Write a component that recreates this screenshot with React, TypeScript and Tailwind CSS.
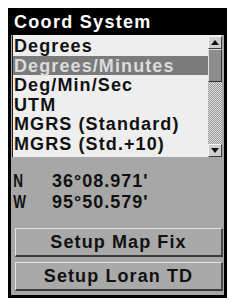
import React from 'react'

const items = ['Degrees', 'Degrees/Minutes', 'Deg/Min/Sec', 'UTM', 'MGRS (Standard)', 'MGRS (Std.+10)']

function Arrow({ down }: { down?: boolean }) {
	return (
		<div className="flex h-[13px] w-full items-center justify-center border-r border-b border-[#3c3c3c] border-t border-l border-t-[#f4f4f4] border-l-[#f4f4f4] bg-[#cfcfcf]">
			<svg width="8" height="5" viewBox="0 0 8 5">
				{down ? <polygon points="0,0 8,0 4,5" fill="#111" /> : <polygon points="0,5 8,5 4,0" fill="#111" />}
			</svg>
		</div>
	)
}

function Button({ label }: { label: string }) {
	return (
		<div className="ml-[4px] mr-[1px] flex h-[29px] items-center justify-center border-t border-l border-t-[#e4e4e4] border-l-[#e4e4e4] border-b-2 border-r-2 border-b-[#3a3a3a] border-r-[#4a4a4a] bg-[#a9a9a9] text-[18px] leading-[26px] font-bold tracking-[1.1px] text-[#111]">
			{label}
		</div>
	)
}

export default function App() {
	return (
		<div className="h-[301px] w-[229px] bg-white pt-[8px] pl-[8px] font-['Liberation_Sans',Arial,sans-serif]">
			<div className="flex h-[290px] w-[219px] flex-col border-[3px] border-black bg-[#a7a7a7]">
				<div className="h-[24px] bg-black px-[3px] text-[18px] leading-[22px] font-bold tracking-[1.3px] text-white">
					Coord System
				</div>
				<div className="mr-[2px] ml-[1px] flex h-[122px] border-l border-[#222] bg-[#eeeeee]">
					<div className="flex-1 pt-[1px]">
						{items.map((it, i) => (
							<div
								key={it}
								className={
									i === 1
										? 'h-[19.5px] bg-[#7b7b7b] pl-[1px] text-[18px] leading-[20px] font-bold tracking-[1.1px] whitespace-nowrap text-[#dcdcdc]'
										: 'h-[19.5px] pl-[1px] text-[18px] leading-[20px] font-bold tracking-[1.1px] whitespace-nowrap text-[#111]'
								}
							>
								{it}
							</div>
						))}
					</div>
					<div className="flex w-[14px] flex-col pt-[1px]">
						<Arrow />
						<div className="h-[33px] border border-[#333] border-t-[#ddd] border-l-[#ddd] bg-[#8d8d8d]" />
						<div className="flex-1 bg-[repeating-conic-gradient(#9c9c9c_0_25%,#dadada_0_50%)] bg-[length:2px_2px]" />
						<Arrow down />
					</div>
				</div>
				<div className="mt-[14px] text-[18px] leading-[21px] font-bold tracking-[1px] text-[#111]">
					<div className="flex">
						<span className="inline-block w-[41px] origin-left scale-x-75 pl-[3px]">N</span>
						<span>36°08.971'</span>
					</div>
					<div className="flex">
						<span className="inline-block w-[41px] origin-left scale-x-75 pl-[3px]">W</span>
						<span>95°50.579'</span>
					</div>
				</div>
				<div className="mt-[15px] flex flex-col gap-[5px]">
					<Button label="Setup Map Fix" />
					<Button label="Setup Loran TD" />
				</div>
			</div>
		</div>
	)
}
